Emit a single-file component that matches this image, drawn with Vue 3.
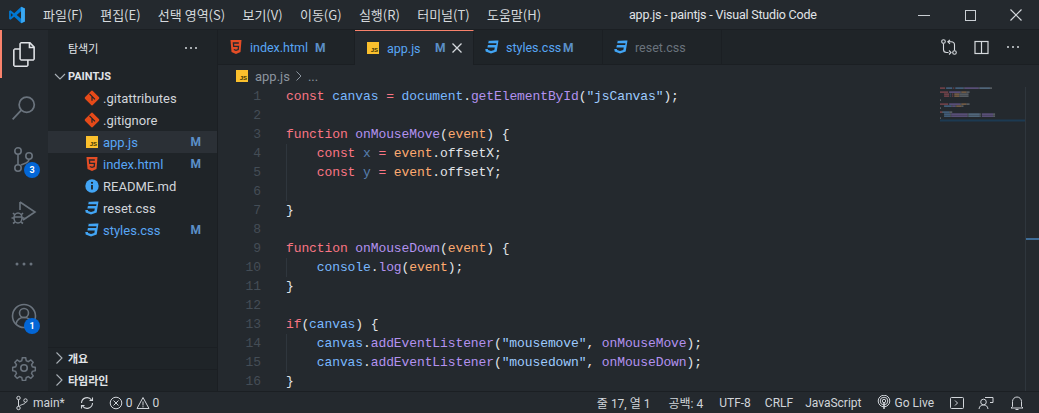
<script setup>
const menus = ['파일(F)', '편집(E)', '선택 영역(S)', '보기(V)', '이동(G)', '실행(R)', '터미널(T)', '도움말(H)']
const files = [
  { name: '.gitattributes', icon: 'git' },
  { name: '.gitignore', icon: 'git' },
  { name: 'app.js', icon: 'js', mod: true, selected: true },
  { name: 'index.html', icon: 'html', mod: true },
  { name: 'README.md', icon: 'info' },
  { name: 'reset.css', icon: 'css' },
  { name: 'styles.css', icon: 'css', mod: true }
]
const tabs = [
  { name: 'index.html', icon: 'html', mod: true, w: 137, mx: 97 },
  { name: 'app.js', icon: 'js', mod: true, active: true, w: 119, mx: 80 },
  { name: 'styles.css', icon: 'css', mod: true, w: 129, mx: 89 },
  { name: 'reset.css', icon: 'css', w: 119, dim: true }
]
const t = (c, s) => ({ c, s })
const code = [
  [t('k', 'const'), t('p', ' '), t('v', 'canvas'), t('p', ' '), t('k', '='), t('p', ' '), t('v', 'document'), t('p', '.'), t('f', 'getElementById'), t('p', '('), t('s', '"jsCanvas"'), t('p', ');')],
  [],
  [t('k', 'function'), t('p', ' '), t('f', 'onMouseMove'), t('p', '('), t('o', 'event'), t('p', ') {')],
  [t('p', '    '), t('k', 'const'), t('p', ' '), t('u', 'x'), t('p', ' '), t('k', '='), t('p', ' '), t('o', 'event'), t('p', '.offsetX;')],
  [t('p', '    '), t('k', 'const'), t('p', ' '), t('u', 'y'), t('p', ' '), t('k', '='), t('p', ' '), t('o', 'event'), t('p', '.offsetY;')],
  [],
  [t('p', '}')],
  [],
  [t('k', 'function'), t('p', ' '), t('f', 'onMouseDown'), t('p', '('), t('o', 'event'), t('p', ') {')],
  [t('p', '    '), t('v', 'console'), t('p', '.'), t('f', 'log'), t('p', '('), t('o', 'event'), t('p', ');')],
  [t('p', '}')],
  [],
  [t('k', 'if'), t('p', '('), t('v', 'canvas'), t('p', ') {')],
  [t('p', '    '), t('v', 'canvas'), t('p', '.'), t('f', 'addEventListener'), t('p', '('), t('s', '"mousemove"'), t('p', ', '), t('f', 'onMouseMove'), t('p', ');')],
  [t('p', '    '), t('v', 'canvas'), t('p', '.'), t('f', 'addEventListener'), t('p', '('), t('s', '"mousedown"'), t('p', ', '), t('f', 'onMouseDown'), t('p', ');')],
  [t('p', '}')]
]
const guides = [3, 4, 5, 9, 13, 14]
const miniColors = { k: '#8a4a52', v: '#4f7397', f: '#6f5f96', o: '#92704f', s: '#64809c', u: '#465a70', p: '#6b7177' }
const miniRects = []
code.forEach((row, y) => {
  let x = 0
  row.forEach(tok => {
    if (tok.s.trim()) {
      const lead = tok.s.length - tok.s.trimStart().length
      miniRects.push({ x: x + lead, y: y * 2, w: tok.s.trim().length, fill: miniColors[tok.c] })
    }
    x += tok.s.length
  })
})
</script>

<template>
  <div class="window">
    <header class="titlebar">
      <svg class="logo" viewBox="0 0 24 24" width="18" height="18"><path fill="#0078d4" d="M17.600 1 8.300 9.600 3.400 5.800 1.500 6.800v10.400l1.900 1 4.900-3.800 9.300 8.600 4.900-2.200V3.200L17.600 1zM3.800 14.700V9.300L6.700 12l-2.900 2.700zm13.600 2.400L11.600 12l5.800-5.100v10.200z"/><path fill="#3ba7f0" d="M17.600 1l4.900 2.200v17.600L17.600 23l-.2-5.900V6.900z"/></svg>
      <nav class="menus">
        <span v-for="m in menus" :key="m" class="menu">{{ m }}</span>
      </nav>
      <div class="title">app.js - paintjs - Visual Studio Code</div>
      <div class="winctl">
        <span class="wbtn"><svg width="14" height="14" viewBox="0 0 14 14"><path d="M1 7.500h12" stroke="#c9ced3" fill="none"/></svg></span>
        <span class="wbtn"><svg width="14" height="14" viewBox="0 0 14 14"><rect x="2.500" y="2.500" width="10" height="10" stroke="#c9ced3" fill="none"/></svg></span>
        <span class="wbtn"><svg width="14" height="14" viewBox="0 0 14 14"><path d="M1.500 1.500l11 11M12.500 1.500l-11 11" stroke="#d5d9dd" stroke-width="1.200" fill="none"/></svg></span>
      </div>
    </header>

    <div class="main">
      <aside class="activity">
        <div class="act active">
          <svg width="25" height="25" viewBox="0 0 24 24"><path fill="#e1e4e8" d="M17.500 0h-9L7 1.500V6H2.500L1 7.500v15.070L2.500 24h12.070L16 22.570V18h4.700l1.300-1.430V4.500L17.500 0zm0 2.120l2.380 2.380H17.500V2.120zm-3 20.380h-12v-15H7v9.070L8.500 18h6v4.500zm6-6h-12v-15H16V6h4.500v10.500z"/></svg>
        </div>
        <div class="act">
          <svg width="26" height="26" viewBox="0 0 24 24" fill="none" stroke="#6a737d" stroke-width="1.600"><circle cx="14.500" cy="9" r="7"/><path d="M9.500 14 1.500 22.500"/></svg>
        </div>
        <div class="act">
          <svg width="28" height="28" viewBox="0 0 28 28" fill="none" stroke="#6a737d" stroke-width="1.600"><circle cx="8" cy="5" r="3.200"/><circle cx="19" cy="10" r="3.200"/><circle cx="8" cy="22" r="3.200"/><path d="M8 8.200v10.600M19 13.200c0 4-5 4-8 5.800"/></svg>
          <span class="badge">3</span>
        </div>
        <div class="act">
          <svg width="28" height="28" viewBox="0 0 28 28" fill="none" stroke="#6a737d" stroke-width="1.600"><path d="M10 4 25 14 13 22M10 4v8"/><ellipse cx="8" cy="20" rx="4" ry="5"/><path d="M3 15l2 2M13 15l-2 2M1.500 20H4M12 20h2.500M3 25.500 5 24M13 25.500 11 24M4 19h8"/></svg>
        </div>
        <div class="act dots">
          <svg width="24" height="6" viewBox="0 0 24 6" fill="#6a737d"><circle cx="5" cy="3" r="1.500"/><circle cx="12" cy="3" r="1.500"/><circle cx="19" cy="3" r="1.500"/></svg>
        </div>
        <div class="spacer"></div>
        <div class="act">
          <svg width="26" height="26" viewBox="0 0 26 26" fill="none" stroke="#6a737d" stroke-width="1.600"><circle cx="13" cy="13" r="11.500"/><circle cx="13" cy="10" r="4.500"/><path d="M5 21c1-4.500 4-6.500 8-6.500s7 2 8 6.500"/></svg>
          <span class="badge">1</span>
        </div>
        <div class="act">
          <svg width="26" height="26" viewBox="0 0 24 24" fill="none" stroke="#6a737d" stroke-width="1.500"><path d="M10.300 1.500h3.400l.6 3 2.100.9 2.600-1.700 2.400 2.400-1.700 2.600.9 2.100 3 .6v3.400l-3 .6-.9 2.100 1.700 2.600-2.400 2.400-2.600-1.700-2.100.9-.6 3h-3.400l-.6-3-2.100-.9-2.600 1.700-2.400-2.400 1.700-2.600-.9-2.100-3-.6v-3.400l3-.6.9-2.100-1.700-2.600 2.400-2.400 2.600 1.700 2.100-.9z" transform="translate(1.200 1.200) scale(.9)"/><circle cx="12" cy="12" r="3"/></svg>
        </div>
      </aside>

      <section class="sidebar">
        <div class="side-head">
          <span>탐색기</span>
          <svg width="14" height="4" viewBox="0 0 14 4" fill="#d5d9dd"><circle cx="2" cy="2" r="1"/><circle cx="7" cy="2" r="1"/><circle cx="12" cy="2" r="1"/></svg>
        </div>
        <div class="tree-title">
          <svg width="16" height="16" viewBox="0 0 16 16" fill="none" stroke="#a9b0b7" stroke-width="1.100"><path d="M3 6l5 5 5-5"/></svg>
          <span>PAINTJS</span>
        </div>
        <div class="tree">
          <div v-for="f in files" :key="f.name" class="row" :class="{ selected: f.selected }">
            <span class="ficon">
              <svg v-if="f.icon === 'git'" width="16" height="16" viewBox="0 0 16 16"><rect x="2.400" y="2.400" width="11.200" height="11.200" rx="1.500" fill="#e64a19" transform="rotate(45 8 8)"/><path d="M5.500 3.800 8 6.300M8 6.300v4.500M8 6.300l3 3" stroke="#1f2428" stroke-width="1.200"/></svg>
              <span v-else-if="f.icon === 'js'" class="js"><i>JS</i></span>
              <svg v-else-if="f.icon === 'html'" width="16" height="16" viewBox="0 0 16 16"><path fill="#e44d26" d="M2.500 1h11l-1 12-4.500 2-4.500-2z"/><path fill="none" stroke="#24292e" stroke-width="1.300" d="M10.800 4H5.400l.3 3.300h4.800l-.3 3.200-2.200.8-2.200-.8"/></svg>
              <svg v-else-if="f.icon === 'info'" width="16" height="16" viewBox="0 0 16 16"><circle cx="8" cy="8" r="6.700" fill="#42a5f5"/><path d="M8 7v4.500" stroke="#1f2428" stroke-width="1.800"/><circle cx="8" cy="4.800" r="1.100" fill="#1f2428"/></svg>
              <svg v-else width="16" height="16" viewBox="0 0 16 16"><path fill="#42a5f5" d="M2.500 1.500h12l-1.800 11-5.700 2-5.300-2-.4-2.500h2.600l.2 1 2.900 1 3.300-1 .5-2.600H3.400l.5-2.500h8.300l.3-1.600H4.200l.5-2.300H12z"/></svg>
            </span>
            <span class="fname" :class="{ mod: f.mod, cssc: f.name === 'reset.css' }">{{ f.name }}</span>
            <span v-if="f.mod" class="m">M</span>
          </div>
        </div>
        <div class="grow"></div>
        <div class="section"><svg width="16" height="16" viewBox="0 0 16 16" fill="none" stroke="#a9b0b7" stroke-width="1.100"><path d="M5.500 2.500 11 8l-5.500 5.500"/></svg><span>개요</span></div>
        <div class="section"><svg width="16" height="16" viewBox="0 0 16 16" fill="none" stroke="#a9b0b7" stroke-width="1.100"><path d="M5.500 2.500 11 8l-5.500 5.500"/></svg><span>타임라인</span></div>
      </section>

      <section class="editor">
        <div class="tabbar">
          <div v-for="tab in tabs" :key="tab.name" class="tab" :class="{ active: tab.active }" :style="{ width: tab.w + 'px' }">
            <span class="ficon">
              <span v-if="tab.icon === 'js'" class="js"><i>JS</i></span>
              <svg v-else-if="tab.icon === 'html'" width="16" height="16" viewBox="0 0 16 16"><path fill="#e44d26" d="M2.500 1h11l-1 12-4.500 2-4.500-2z"/><path fill="none" stroke="#24292e" stroke-width="1.300" d="M10.800 4H5.400l.3 3.300h4.800l-.3 3.200-2.200.8-2.200-.8"/></svg>
              <svg v-else width="16" height="16" viewBox="0 0 16 16"><path fill="#42a5f5" d="M2.500 1.500h12l-1.800 11-5.700 2-5.300-2-.4-2.500h2.600l.2 1 2.900 1 3.300-1 .5-2.600H3.400l.5-2.500h8.300l.3-1.600H4.200l.5-2.300H12z"/></svg>
            </span>
            <span class="tname" :class="{ mod: tab.mod, dim: tab.dim }">{{ tab.name }}</span>
            <span v-if="tab.mod" class="m tabm" :style="{ left: tab.mx + 'px' }">M</span>
            <svg v-if="tab.active" class="tclose" width="12" height="12" viewBox="0 0 12 12"><path d="M1.500 1.500l9 9M10.500 1.500l-9 9" stroke="#d5d9dd" stroke-width="1.300" fill="none"/></svg>
          </div>
          <div class="tabfill">
            <svg width="16" height="16" viewBox="0 0 16 16" fill="none" stroke="#d5d9dd" stroke-width="1.100"><circle cx="2.500" cy="2.500" r="1.800"/><circle cx="13.500" cy="13.500" r="1.800"/><path d="M2.500 4.500v6c0 2 1 3 3 3h2M9 .8 6.800 2.800 9 4.800M7 2.800h3c2 0 3.500 1 3.500 3v5.700M8 11.500l2 2-2 2"/></svg>
            <svg width="15" height="15" viewBox="0 0 15 15" fill="none" stroke="#d5d9dd" stroke-width="1.200"><rect x="1" y="1.500" width="13" height="12"/><path d="M7.500 1.500v12"/></svg>
            <svg width="14" height="4" viewBox="0 0 14 4" fill="#d5d9dd"><circle cx="2" cy="2" r="1"/><circle cx="7" cy="2" r="1"/><circle cx="12" cy="2" r="1"/></svg>
          </div>
        </div>
        <div class="crumbs">
          <span class="js small"><i>JS</i></span>
          <span>app.js</span>
          <svg width="10" height="12" viewBox="0 0 10 12" fill="none" stroke="#8b949e"><path d="M2.500 1.500 7 6l-4.500 4.500"/></svg>
          <span>...</span>
        </div>
        <div class="codearea">
          <div class="gutter">
            <div v-for="(l, i) in code" :key="i" class="ln">{{ i + 1 }}</div>
          </div>
          <div class="lines">
            <div v-for="(l, i) in code" :key="i" class="line" :class="{ guide: guides.includes(i) }"><span v-for="(tok, j) in l" :key="j" :class="tok.c">{{ tok.s }}</span></div>
          </div>
          <svg class="minimap" width="86" height="50" viewBox="0 0 86 50">
            <rect v-for="(r, i) in miniRects" :key="i" :x="r.x * 1.02" :y="r.y + 0.500" :width="r.w * 1.02" height="1.200" :fill="r.fill"/>
            <rect x="0" y="32.500" width="85" height="2" fill="#1c3a52"/>
          </svg>
          <div class="ruler"><span class="mark"></span></div>
        </div>
      </section>
    </div>

    <footer class="status">
      <div class="st-left">
        <span class="st branch">
          <svg width="14" height="16" viewBox="0 0 14 16" fill="none" stroke="#d1d5da" stroke-width="1"><circle cx="3.500" cy="3" r="1.700"/><circle cx="3.500" cy="13" r="1.700"/><circle cx="10.500" cy="5.500" r="1.700"/><path d="M3.500 4.700v6.600M10.500 7.200c0 2.300-5 2-6.500 4.300"/></svg>
          main*
        </span>
        <span class="st sync">
          <svg width="16" height="16" viewBox="0 0 16 16" fill="none" stroke="#d1d5da" stroke-width="1.100"><path d="M2.500 8a5.500 5.500 0 0 1 10-3M13.500 8a5.500 5.500 0 0 1-10 3M10.500 5.500h3l0-3M5.500 10.500h-3v3"/></svg>
        </span>
        <span class="st errors">
          <svg width="14" height="14" viewBox="0 0 14 14" fill="none" stroke="#d1d5da"><circle cx="7" cy="7" r="5.800"/><path d="M4.500 4.500l5 5M9.500 4.500l-5 5"/></svg>
          <span>0</span>
          <svg width="14" height="14" viewBox="0 0 14 14" fill="none" stroke="#d1d5da"><path d="M7 1.500 13 12.500H1zM7 5.500v4M7 10.200v1.200"/></svg>
          <span>0</span>
        </span>
      </div>
      <div class="st-right">
        <span class="sr w1">줄 17, 열 1</span>
        <span class="sr w2">공백: 4</span>
        <span class="sr w3">UTF-8</span>
        <span class="sr w4">CRLF</span>
        <span class="sr w5">JavaScript</span>
        <span class="sr live">
          <svg width="14" height="15" viewBox="0 0 14 15" fill="none" stroke="#d1d5da"><circle cx="7" cy="6" r="1.700"/><circle cx="7" cy="6" r="3.800"/><circle cx="7" cy="6" r="5.800"/><path d="M7 8v6" stroke-width="1.500"/></svg>
          Go Live
        </span>
        <span class="sr ic1"><svg width="14" height="14" viewBox="0 0 14 14" fill="none" stroke="#d1d5da"><rect x=".5" y="1.500" width="13" height="11" rx="1"/><path d="M5 4.500 7.500 7 5 9.500"/></svg></span>
        <span class="sr ic2"><svg width="16" height="14" viewBox="0 0 16 14" fill="none" stroke="#d1d5da"><circle cx="5.500" cy="6" r="2.800"/><path d="M1 13c.5-3 2-4 4.500-4s4 1 4.500 4M7 1.500h8v5h-3"/></svg></span>
        <span class="sr ic3"><svg width="14" height="16" viewBox="0 0 14 16" fill="none" stroke="#d1d5da"><path d="M2.500 11.500V6.500a4.500 4.500 0 0 1 9 0v5l1.500 1.500H1zM5.500 14.500h3"/></svg></span>
      </div>
    </footer>
  </div>
</template>

<style>
html, body { margin: 0; background: #24292e; overflow: hidden; }
</style>

<style scoped>
.window {
  width: 1039px; height: 413px; display: flex; flex-direction: column;
  background: #24292e; color: #e1e4e8; overflow: hidden;
  font-family: Roboto, "Noto Sans CJK KR", sans-serif; font-size: 13px;
}
.titlebar { height: 30px; flex: none; display: flex; align-items: center; background: #24292e; border-bottom: 1px solid #1b1f23; box-sizing: border-box; }
.logo { margin-left: 8px; flex: none; }
.menus { display: flex; margin-left: 17px; width: 570px; flex: none; gap: 17.300px; font-family: "Noto Sans CJK KR", sans-serif; font-size: 13px; color: #d5d9dd; }
.menu { white-space: nowrap; }
.title { margin-left: 16px; font-size: 12.500px; letter-spacing: -0.2px; color: #e1e4e8; white-space: nowrap; }
.winctl { margin-left: auto; display: flex; }
.wbtn { width: 46px; height: 29px; display: flex; align-items: center; justify-content: center; }

.main { flex: 1; display: flex; min-height: 0; }

.activity { width: 48px; flex: none; display: flex; flex-direction: column; background: #24292e; }
.act { width: 48px; height: 52px; flex: none; display: flex; align-items: center; justify-content: center; position: relative; box-sizing: border-box; }
.act.active { height: 48px; margin-bottom: 4px; border-left: 2px solid #f9826c; padding-right: 2px; }
.spacer { flex: 1; }
.badge { position: absolute; left: 24px; top: 28px; width: 16px; height: 16px; border-radius: 50%; background: #0366d6; color: #fff; font-size: 9px; font-weight: 700; display: flex; align-items: center; justify-content: center; }

.sidebar { width: 169px; flex: none; display: flex; flex-direction: column; background: #1f2428; border-right: 1px solid #1b1f23; }
.side-head { height: 35px; display: flex; align-items: center; justify-content: space-between; padding: 0 19px 0 20px; font-size: 11px; font-family: "Noto Sans CJK KR", sans-serif; color: #e1e4e8; }
.tree-title { height: 22px; display: flex; align-items: center; padding-left: 4px; font-size: 11px; font-weight: 700; color: #e1e4e8; }
.row { height: 22px; display: flex; align-items: center; padding: 0 16px 0 36px; font-size: 13px; color: #d1d5da; }
.row.selected { background: #2b3036; }
.ficon { width: 16px; height: 16px; display: flex; align-items: center; justify-content: center; flex: none; }
.fname { margin-left: 3px; flex: 1; }
.mod { color: #58a6f5; }
.cssc { color: #d1d5da; }
.m { color: #5b8fc7; font-weight: 700; font-size: 12px; }
.js { width: 12px; height: 12px; background: #fbc02d; display: inline-flex; align-items: flex-end; justify-content: flex-end; font-family: "Liberation Sans", sans-serif; font-size: 6px; font-weight: 700; color: #3b3200; line-height: 7px; flex: none; }
.js i { font-style: normal; margin-right: 1px; }
.grow { flex: 1; }
.section { height: 22px; box-sizing: border-box; display: flex; align-items: center; gap: 1px; padding: 0 0 2px 3px; border-top: 1px solid #1b1f23; font-family: "Noto Sans CJK KR", sans-serif; font-size: 11px; font-weight: 700; color: #e1e4e8; }

.editor { flex: 1; min-width: 0; display: flex; flex-direction: column; }
.tabbar { height: 35px; flex: none; display: flex; background: #1f2428; border-bottom: 1px solid #1b1f23; box-sizing: border-box; }
.tab { flex: none; box-sizing: border-box; display: flex; align-items: center; padding-left: 10px; border-right: 1px solid #1b1f23; position: relative; font-size: 12.500px; }
.tab.active { background: #24292e; border-top: 1px solid #f9826c; height: 35px; }
.tname { margin-left: 6px; }
.dim { color: #6a737d; }
.tabm { position: absolute; top: 11px; }
.active .tabm { top: 10px; }
.tclose { position: absolute; right: 10px; top: 11px; }
.tabfill { flex: 1; display: flex; align-items: center; justify-content: flex-end; gap: 17px; padding-right: 19px; }

.crumbs { height: 22px; flex: none; display: flex; align-items: center; gap: 4px; padding-left: 18px; font-size: 13px; color: #8b949e; }
.js.small { margin-right: 3px; }

.codearea { flex: 1; min-height: 0; position: relative; display: flex; overflow: hidden; font-family: "Liberation Mono", monospace; font-size: 13px; line-height: 19px; letter-spacing: -0.1px; }
.gutter { width: 43px; flex: none; text-align: right; color: #444d56; }
.ln { height: 19px; }
.lines { margin-left: 25px; flex: 1; white-space: pre; }
.line { height: 19px; position: relative; }
.line.guide::before { content: ""; position: absolute; left: 0; top: 0; bottom: 0; width: 1px; background: #2f363d; }
.k { color: #f97583; }
.v { color: #79b8ff; }
.f { color: #b392f0; }
.o { color: #ffab70; }
.s { color: #9ecbff; }
.u { color: #79b8ff; opacity: .6; }
.p { color: #e1e4e8; }
.minimap { position: absolute; left: 722px; top: 0; }
.ruler { position: absolute; right: 0; top: 0; bottom: 0; width: 13px; border-left: 1px solid #2f363d; }
.mark { position: absolute; left: 0; right: 0; top: 151px; height: 2px; background: #3e6c96; }

.status { height: 22px; flex: none; box-sizing: border-box; display: flex; justify-content: space-between; align-items: center; background: #24292e; border-top: 1px solid #1b1f23; font-size: 12px; color: #d1d5da; }
.st-left { display: flex; align-items: center; }
.st { display: flex; align-items: center; gap: 4px; }
.branch { margin-left: 15px; }
.sync { margin-left: 14px; }
.errors { margin-left: 14px; gap: 3px; }
.st-right { display: flex; align-items: center; }
.sr { display: flex; align-items: center; gap: 4px; white-space: nowrap; }
.w1 { margin-right: 18px; }
.w2 { margin-right: 16px; }
.w3 { margin-right: 14px; }
.w4 { margin-right: 12px; }
.w5 { margin-right: 15px; }
.live { margin-right: 16px; }
.ic1 { margin-right: 14px; }
.ic2 { margin-right: 16px; }
.ic3 { margin-right: 15px; }
</style>
